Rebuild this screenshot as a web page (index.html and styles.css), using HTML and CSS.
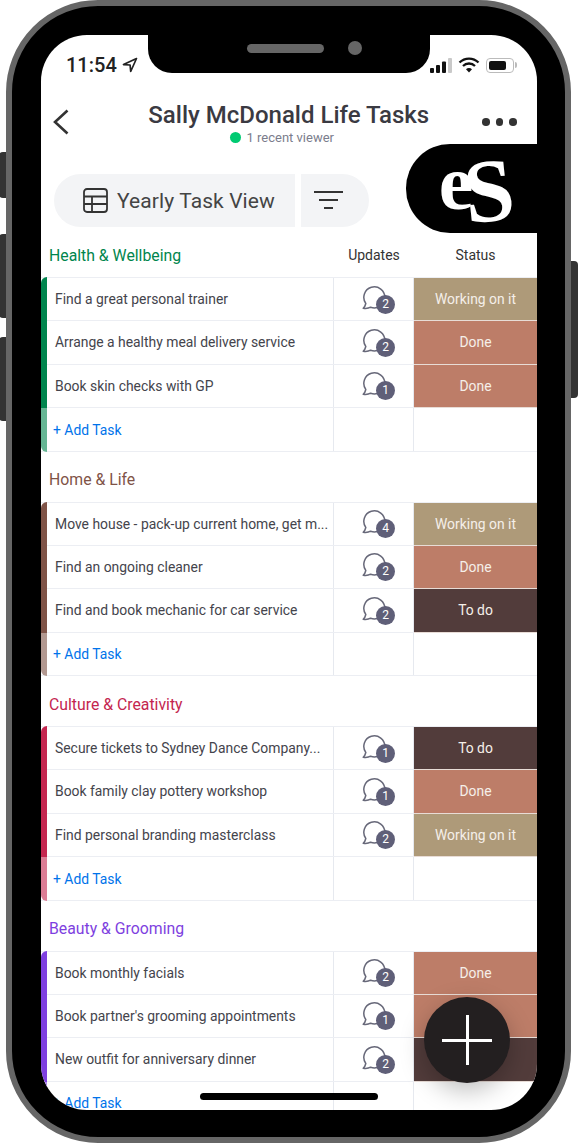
FILE: index.html
```html
<!DOCTYPE html>
<html lang="en">
<head>
    <meta charset="utf-8">
    <meta name="viewport" content="width=device-width, initial-scale=1.0">
    <title>Sally McDonald Life Tasks</title>
    <link rel="stylesheet" href="styles.css">
</head>
<body>
    <!-- chat bubble used in every updates cell -->
    <svg class="defs" width="0" height="0">
        <symbol id="bubble" viewBox="0 0 26 25">
            <path d="M3.800 17.500A10.500 10.500 0 1 1 8.600 21.200C6.500 22.400 4 22.600 1.200 22.200 2.600 21 3.400 19.400 3.800 17.500Z" fill="none" stroke="#676879" stroke-width="1.500" stroke-linejoin="round"/>
        </symbol>
    </svg>

    <div class="phone">
        <span class="side-btn side-mute"></span>
        <span class="side-btn side-up"></span>
        <span class="side-btn side-down"></span>
        <span class="side-btn side-power"></span>

        <div class="screen">
            <!-- notch -->
            <div class="notch">
                <span class="speaker"></span>
                <span class="camera"></span>
            </div>

            <div class="status-bar">
                <div class="status-left">
                    <span class="clock">11:54</span>
                    <svg width="16" height="16" viewBox="0 0 16 16"><path d="M14.500 1.500 1.500 7.600l6.600.4.6 6.500z" fill="none" stroke="#222" stroke-width="1.700" stroke-linejoin="round"/></svg>
                </div>
                <div class="status-right">
                    <svg width="22" height="15" viewBox="0 0 22 15"><rect x="0" y="10" width="4" height="5" rx="1" fill="#111"/><rect x="6" y="7" width="4" height="8" rx="1" fill="#111"/><rect x="12" y="3.500" width="4" height="11.500" rx="1" fill="#111"/><rect x="18" y="0" width="4" height="15" rx="1" fill="#c9c9c9"/></svg>
                    <svg width="22" height="16" viewBox="0 0 22 16"><path d="M1.500 5.500a13.500 13.500 0 0 1 19 0M5 9a8.500 8.500 0 0 1 12 0" fill="none" stroke="#111" stroke-width="2.300"/><path d="M8 12.200a4.200 4.200 0 0 1 6 0L11 15.500z" fill="#111"/></svg>
                    <div class="battery"><span class="battery-fill"></span></div>
                </div>
            </div>

            <div class="board-head">
                <svg width="16" height="26" viewBox="0 0 16 26"><path d="M14.500 1.500 2 13l12.500 11.500" fill="none" stroke="#333" stroke-width="2.600"/></svg>
                <div class="board-title">
                    <h1>Sally McDonald Life Tasks</h1>
                    <p><span class="dot"></span>1 recent viewer</p>
                </div>
                <div class="more"><span></span><span></span><span></span></div>
            </div>

            <div class="toolbar">
                <div class="view-pill">
                    <svg width="25" height="25" viewBox="0 0 25 25"><rect x="1" y="1" width="23" height="23" rx="3" fill="none" stroke="#333" stroke-width="1.800"/><path d="M1 8.500h23M1 16h23M9 8.500V24" fill="none" stroke="#333" stroke-width="1.800"/></svg>
                    <span>Yearly Task View</span>
                </div>
                <div class="filter-pill">
                    <span class="f1"></span><span class="f2"></span><span class="f3"></span>
                </div>
                <div class="logo"><span class="logo-mark">e<span class="logo-s">S</span></span></div>
            </div>

            <!-- Health -->
            <section class="group green">
                <div class="group-head">
                    <h2>Health &amp; Wellbeing</h2>
                    <span>Updates</span>
                    <span>Status</span>
                </div>
                <div class="row">
                    <div class="name">Find a great personal trainer</div>
                    <div class="updates"><span class="chat"><svg width="26" height="25"><use href="#bubble"/></svg><b>2</b></span></div>
                    <div class="status working">Working on it</div>
                </div>
                <div class="row">
                    <div class="name">Arrange a healthy meal delivery service</div>
                    <div class="updates"><span class="chat"><svg width="26" height="25"><use href="#bubble"/></svg><b>2</b></span></div>
                    <div class="status done">Done</div>
                </div>
                <div class="row">
                    <div class="name">Book skin checks with GP</div>
                    <div class="updates"><span class="chat"><svg width="26" height="25"><use href="#bubble"/></svg><b>1</b></span></div>
                    <div class="status done">Done</div>
                </div>
                <div class="row add-row">
                    <div class="name">+ Add Task</div>
                    <div class="updates"></div>
                    <div class="status"></div>
                </div>
            </section>

            <!-- Home -->
            <section class="group brown">
                <div class="group-head">
                    <h2>Home &amp; Life</h2>
                </div>
                <div class="row">
                    <div class="name">Move house - pack-up current home, get m...</div>
                    <div class="updates"><span class="chat"><svg width="26" height="25"><use href="#bubble"/></svg><b>4</b></span></div>
                    <div class="status working">Working on it</div>
                </div>
                <div class="row">
                    <div class="name">Find an ongoing cleaner</div>
                    <div class="updates"><span class="chat"><svg width="26" height="25"><use href="#bubble"/></svg><b>2</b></span></div>
                    <div class="status done">Done</div>
                </div>
                <div class="row">
                    <div class="name">Find and book mechanic for car service</div>
                    <div class="updates"><span class="chat"><svg width="26" height="25"><use href="#bubble"/></svg><b>2</b></span></div>
                    <div class="status todo">To do</div>
                </div>
                <div class="row add-row">
                    <div class="name">+ Add Task</div>
                    <div class="updates"></div>
                    <div class="status"></div>
                </div>
            </section>

            <!-- Culture -->
            <section class="group red">
                <div class="group-head">
                    <h2>Culture &amp; Creativity</h2>
                </div>
                <div class="row">
                    <div class="name">Secure tickets to Sydney Dance Company...</div>
                    <div class="updates"><span class="chat"><svg width="26" height="25"><use href="#bubble"/></svg><b>1</b></span></div>
                    <div class="status todo">To do</div>
                </div>
                <div class="row">
                    <div class="name">Book family clay pottery workshop</div>
                    <div class="updates"><span class="chat"><svg width="26" height="25"><use href="#bubble"/></svg><b>1</b></span></div>
                    <div class="status done">Done</div>
                </div>
                <div class="row">
                    <div class="name">Find personal branding masterclass</div>
                    <div class="updates"><span class="chat"><svg width="26" height="25"><use href="#bubble"/></svg><b>2</b></span></div>
                    <div class="status working">Working on it</div>
                </div>
                <div class="row add-row">
                    <div class="name">+ Add Task</div>
                    <div class="updates"></div>
                    <div class="status"></div>
                </div>
            </section>

            <!-- Beauty -->
            <section class="group purple">
                <div class="group-head">
                    <h2>Beauty &amp; Grooming</h2>
                </div>
                <div class="row">
                    <div class="name">Book monthly facials</div>
                    <div class="updates"><span class="chat"><svg width="26" height="25"><use href="#bubble"/></svg><b>2</b></span></div>
                    <div class="status done">Done</div>
                </div>
                <div class="row">
                    <div class="name">Book partner's grooming appointments</div>
                    <div class="updates"><span class="chat"><svg width="26" height="25"><use href="#bubble"/></svg><b>1</b></span></div>
                    <div class="status done"></div>
                </div>
                <div class="row">
                    <div class="name">New outfit for anniversary dinner</div>
                    <div class="updates"><span class="chat"><svg width="26" height="25"><use href="#bubble"/></svg><b>2</b></span></div>
                    <div class="status todo"></div>
                </div>
                <div class="row add-row">
                    <div class="name">+ Add Task</div>
                    <div class="updates"></div>
                    <div class="status"></div>
                </div>
            </section>

            <!-- floating things -->
            <div class="home-bar"></div>
            <div class="fab"><span class="fab-h"></span><span class="fab-v"></span></div>
        </div>
    </div>
</body>
</html>
```

FILE: styles.css
```css
* {
    box-sizing: border-box;
}

body {
    font-family: Roboto, "Liberation Sans", sans-serif;
    margin: 0;
    padding: 0;
    width: 578px;
    height: 1143px;
    background-color: #fff;
    overflow: hidden;
}

.defs {
    display: block;
}

/* phone frame */
.phone {
    position: relative;
    width: 565px;
    height: 1143px;
    margin-left: 6px;
    padding: 29px 28px 29px 29px;
    background-color: #000;
    border: 6px solid #666;
    border-radius: 92px;
}

.side-btn {
    position: absolute;
    background-color: #333;
    width: 7px;
    border-radius: 4px 0 0 4px;
}

.side-mute { left: -13px; top: 146px; height: 46px; }
.side-up { left: -13px; top: 228px; height: 84px; }
.side-down { left: -13px; top: 331px; height: 84px; }
.side-power { left: auto; right: -13px; top: 255px; height: 137px; border-radius: 0 4px 4px 0; }

.screen {
    position: relative;
    width: 496px;
    height: 1075px;
    background-color: #fff;
    border-radius: 46px;
    overflow: hidden;
}

.notch {
    position: absolute;
    top: 0;
    left: 107px;
    width: 282px;
    height: 38px;
    background-color: #000;
    border-radius: 0 0 24px 24px;
}

.speaker {
    position: absolute;
    left: 99px;
    top: 9px;
    width: 77px;
    height: 9px;
    background-color: #666;
    border-radius: 5px;
}

.camera {
    position: absolute;
    left: 200px;
    top: 6px;
    width: 14px;
    height: 14px;
    background-color: #666;
    border-radius: 50%;
}

/* status bar */
.status-bar {
    display: flex;
    justify-content: space-between;
    align-items: center;
    height: 60px;
    padding: 0 23px 0 25px;
}

.status-left {
    display: flex;
    align-items: center;
    gap: 5px;
}

.clock {
    font-size: 20px;
    font-weight: 500;
    color: #222;
}

.status-right {
    display: flex;
    align-items: center;
    gap: 6px;
}

.battery {
    position: relative;
    width: 28px;
    height: 15px;
    padding: 2px;
    border: 1.5px solid #bbb;
    border-radius: 4px;
}

/* battery nub */
.battery::after {
    content: "";
    position: absolute;
    right: -4px;
    top: 3px;
    width: 2px;
    height: 6px;
    background-color: #bbb;
    border-radius: 0 2px 2px 0;
}

.battery-fill {
    display: block;
    width: 17px;
    height: 100%;
    background-color: #111;
    border-radius: 2px;
}

/* title */
.board-head {
    display: flex;
    align-items: flex-start;
    justify-content: space-between;
    height: 49px;
    padding: 14px 20px 0 12px;
}

.board-title {
    text-align: center;
    margin-top: -8px;
    margin-left: 26px;
}

.board-title h1 {
    margin: 0;
    font-size: 24px;
    font-weight: 500;
    line-height: 28px;
    color: #3a3a42;
}

.board-title p {
    margin: 1px 0 0;
    padding-right: 14px;
    font-size: 13px;
    line-height: 16px;
    color: #7b7d8c;
}

.dot {
    display: inline-block;
    width: 11px;
    height: 11px;
    margin-right: 6px;
    vertical-align: -1px;
    background-color: #00ca72;
    border-radius: 50%;
}

.more {
    display: flex;
    gap: 6px;
    margin-top: 9px;
}

.more span {
    width: 7.5px;
    height: 7.5px;
    background-color: #333;
    border-radius: 50%;
}

/* toolbar */
.toolbar {
    display: flex;
    align-items: flex-start;
    height: 89px;
    padding-left: 13px;
}

.view-pill {
    display: flex;
    align-items: center;
    gap: 9px;
    width: 241px;
    height: 53px;
    margin-top: 30px;
    padding-left: 29px;
    font-size: 21px;
    letter-spacing: 0.1px;
    color: #444;
    background-color: #f3f4f6;
    border-radius: 27px 0 0 27px;
}

.filter-pill {
    display: flex;
    flex-direction: column;
    align-items: center;
    gap: 6px;
    width: 68px;
    height: 53px;
    margin-top: 30px;
    margin-left: 6px;
    padding: 17px 14px 0 0;
    background-color: #f3f4f6;
    border-radius: 0 27px 27px 0;
}

.filter-pill span {
    height: 2px;
    background-color: #333;
}

.f1 { width: 29px; }
.f2 { width: 19px; }
.f3 { width: 9px; }

.logo {
    display: flex;
    align-items: center;
    justify-content: center;
    width: 131px;
    height: 89px;
    margin-left: auto;
    padding-left: 10px;
    font-family: "Liberation Serif", serif;
    font-weight: 700;
    color: #fff;
    background-color: #000;
    border-radius: 44px 0 0 44px;
}

.logo-mark {
    font-size: 78px;
    line-height: 89px;
    margin-top: -12px;
}

.logo-s {
    display: inline-block;
    font-size: 90px;
    line-height: 60px;
    margin-left: -9px;
    transform: translateY(12px) rotate(-6deg);
}

/* groups */
.group {
    margin-bottom: 6px;
}

.group-head {
    display: grid;
    grid-template-columns: 293px 80px 1fr;
    align-items: center;
    height: 44px;
    font-size: 14px;
    color: #333;
    text-align: center;
}

.group-head h2 {
    margin: 0;
    padding-left: 8px;
    font-size: 15.8px;
    font-weight: 400;
    text-align: left;
}

.row {
    position: relative;
    display: grid;
    grid-template-columns: 293px 80px 1fr;
    height: 43.5px;
    border-bottom: 1px solid #eceef3;
    font-size: 13.9px;
}

/* coloured bar down the left of the group */
.row::before {
    content: "";
    position: absolute;
    left: 0;
    top: 0;
    bottom: -1px;
    width: 6px;
    background-color: var(--bar);
}

.group-head + .row {
    border-top: 1px solid #eceef3;
    height: 44px;
}

.group-head + .row::before {
    top: -1px;
    border-top-left-radius: 6px;
}

.add-row::before {
    background-color: var(--bar-light);
    border-bottom-left-radius: 6px;
}

.name {
    display: flex;
    align-items: center;
    padding-left: 14px;
    color: #44444c;
    white-space: nowrap;
    border-right: 1px solid #e6e9ef;
}

.updates {
    display: flex;
    align-items: center;
    justify-content: center;
    border-right: 1px solid #e6e9ef;
}

.chat {
    position: relative;
    display: block;
    width: 26px;
    height: 25px;
    margin: -2px 0 0 3px;
}

.chat svg {
    display: block;
}

.chat b {
    position: absolute;
    left: 14px;
    top: 9px;
    width: 19px;
    height: 19px;
    font-size: 12px;
    font-weight: 400;
    line-height: 19px;
    text-align: center;
    color: #fff;
    background-color: #5f5f78;
    border-radius: 50%;
}

.status {
    display: flex;
    align-items: center;
    justify-content: center;
    margin-bottom: -1px;
    color: #f5efe9;
    border-bottom: 1.5px solid #e8dcd6;
}

.status.working { background-color: #ae9a79; }
.status.done { background-color: #bd7d68; }
.status.todo { background-color: #523c3b; }
.add-row .status { border-bottom: 0; margin-bottom: 0; }

.add-row .name {
    padding: 1px 0 0 12px;
    color: #0073ea;
}

/* group colours */
.green { --bar: #00854d; --bar-light: #66b694; }
.brown { --bar: #7f5347; --bar-light: #b29890; }
.red { --bar: #c4264f; --bar-light: #dc7d95; }
.purple { --bar: #7e3fe0; --bar-light: #b28cec; }

.group-head h2 {
    color: var(--bar);
}

/* overlays */
.home-bar {
    position: absolute;
    left: 159px;
    top: 1058px;
    width: 178px;
    height: 7px;
    background-color: #000;
    border-radius: 4px;
}

.fab {
    position: absolute;
    left: 383px;
    top: 962px;
    width: 86px;
    height: 86px;
    background-color: #231f20;
    border-radius: 50%;
    box-shadow: 0 8px 24px rgba(0, 0, 0, 0.25);
}

.fab-h {
    position: absolute;
    left: 18px;
    top: 42px;
    width: 50px;
    height: 3px;
    background-color: #fff;
}

.fab-v {
    position: absolute;
    left: 42px;
    top: 18px;
    width: 3px;
    height: 50px;
    background-color: #fff;
}
```
